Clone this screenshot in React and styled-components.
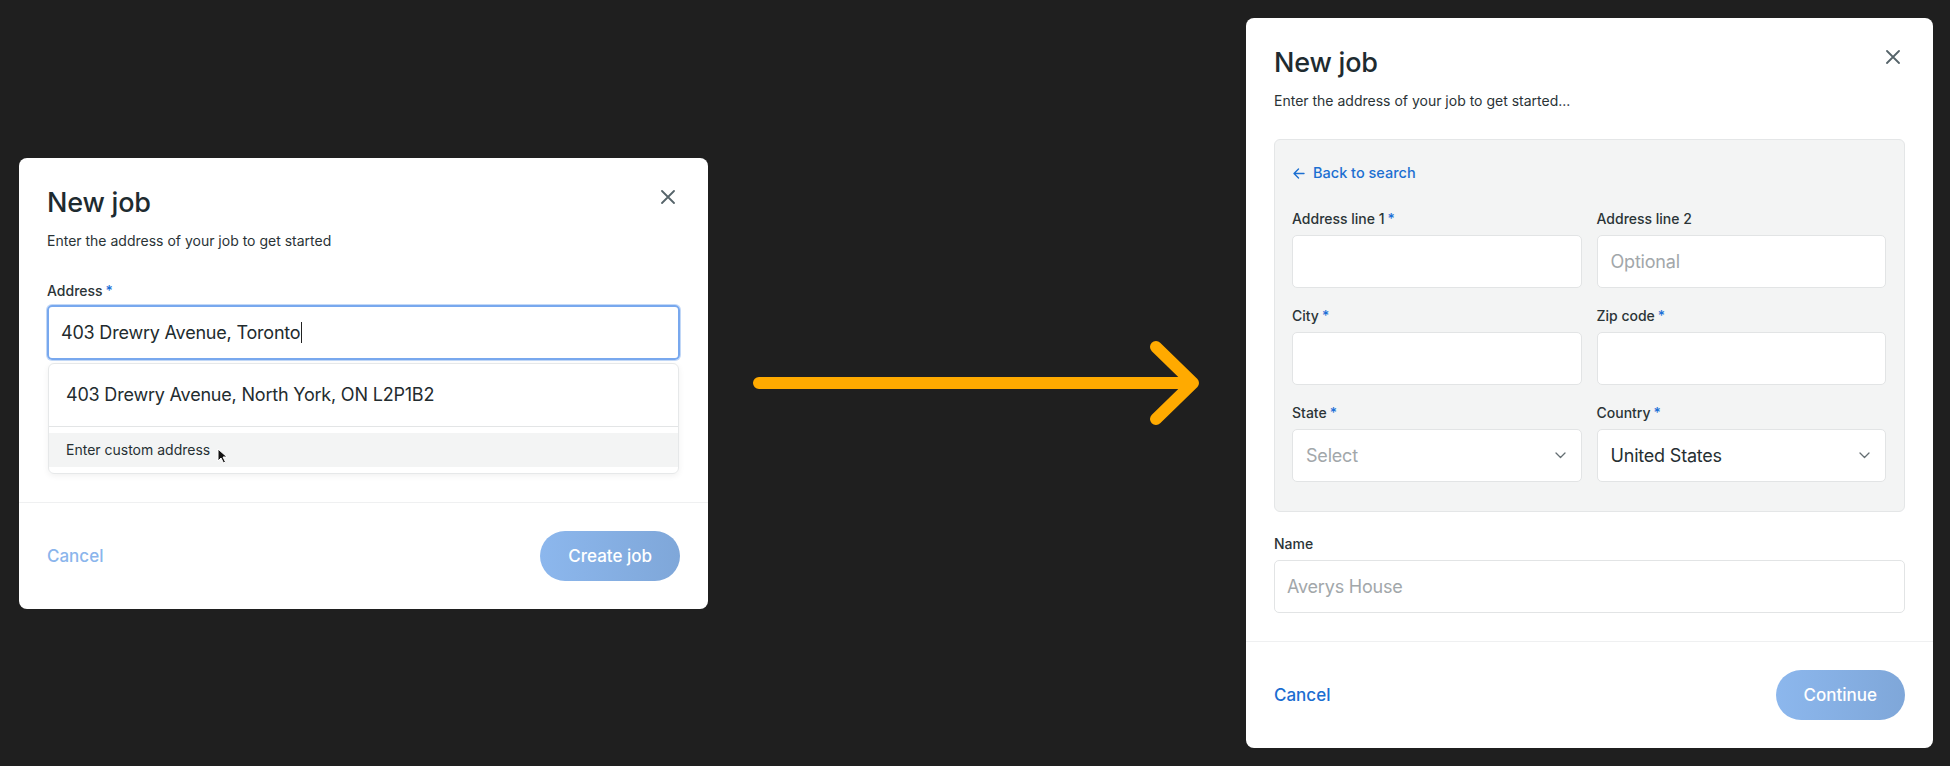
import styled, { createGlobalStyle } from "styled-components";

const GlobalStyle = createGlobalStyle`
  * { box-sizing: border-box; }
  body {
    margin: 0;
    background: #1f1f1f;
    font-family: Inter, "Liberation Sans", sans-serif;
    color: #263236;
  }
`;

const Stage = styled.div`
  display: flex;
  align-items: center;
  height: 766px;
  width: 1950px;
  padding-left: 19px;
`;

const Dialog = styled.div`
  width: ${(p) => p.$width}px;
  background: #ffffff;
  border-radius: 8px;
  display: flex;
  flex-direction: column;
  flex-shrink: 0;
`;

const Header = styled.div`
  display: flex;
  justify-content: space-between;
  align-items: flex-start;
  padding: 28px 28px 0;
`;

const Title = styled.h2`
  margin: 0;
  font-size: 27px;
  line-height: 34px;
  font-weight: 500;
  color: #1e2b30;
  letter-spacing: -0.2px;
`;

const CloseButton = styled.button`
  width: 24px;
  height: 24px;
  margin-top: -1px;
  padding: 0;
  border: none;
  background: none;
  display: flex;
  align-items: center;
  justify-content: center;
`;

const Body = styled.div`
  padding: 0 28px 28px;
  display: flex;
  flex-direction: column;
`;

const Subtitle = styled.p`
  margin: 11px 0 0;
  font-size: 14px;
  line-height: 20px;
  color: #2a3336;
`;

const Label = styled.div`
  font-size: 14px;
  line-height: 20px;
  font-weight: 500;
  color: #2b3437;
  margin-top: ${(p) => p.$top || 0}px;
  margin-bottom: ${(p) => p.$bottom || 6}px;
`;

const Star = styled.span`
  color: #1b6fd6;
  margin-left: 3px;
`;

const FocusInput = styled.div`
  height: 55px;
  border: 2px solid #78a8ee;
  box-shadow: 0 0 0 1px rgba(120, 168, 238, 0.45);
  border-radius: 5px;
  display: flex;
  align-items: center;
  padding: 0 12px;
  font-size: 18px;
  letter-spacing: -0.2px;
  color: #222b2e;
`;

const Caret = styled.span`
  display: inline-block;
  width: 1px;
  height: 21px;
  background: #222;
  margin-left: 1px;
`;

const Suggestions = styled.div`
  margin: 3px 1px 0;
  border: 1px solid #e6e8e9;
  border-radius: 6px;
  box-shadow: 0 2px 6px rgba(0, 0, 0, 0.06);
  padding-bottom: 6px;
  overflow: hidden;
`;

const Suggestion = styled.div`
  height: 63px;
  display: flex;
  align-items: center;
  padding-left: 17px;
  font-size: 18px;
  letter-spacing: -0.2px;
  color: #232c2f;
  border-bottom: 1px solid #e3e5e6;
  margin-bottom: 6px;
`;

const CustomRow = styled.div`
  position: relative;
  height: 34px;
  display: flex;
  align-items: center;
  padding-left: 17px;
  font-size: 14px;
  color: #263033;
  background: #f3f4f4;
`;

const Pointer = styled.svg`
  position: absolute;
  left: 168px;
  top: 15px;
`;

const PanelBox = styled.div`
  margin-top: 28px;
  background: #f3f4f4;
  border: 1px solid #e4e6e7;
  border-radius: 6px;
  padding: 23px 18px 29px 17px;
`;

const BackLink = styled.a`
  display: flex;
  align-items: center;
  gap: 8px;
  font-size: 14.5px;
  line-height: 20px;
  font-weight: 500;
  color: #1c6fd1;
  padding-left: 1px;
`;

const FieldGrid = styled.div`
  display: grid;
  grid-template-columns: 1fr 1fr;
  column-gap: 15px;
  row-gap: 18px;
  margin-top: 26px;
`;

const Field = styled.div`
  display: flex;
  flex-direction: column;
`;

const TextBox = styled.div`
  height: 53px;
  background: #ffffff;
  border: 1px solid #e2e4e5;
  border-radius: 5px;
  display: flex;
  align-items: center;
  justify-content: space-between;
  padding: 0 15px 0 ${(p) => p.$pad || 13}px;
  font-size: 18px;
  letter-spacing: -0.2px;
  color: ${(p) => (p.$placeholder ? "#a2a7aa" : "#262f32")};
`;

const Footer = styled.div`
  border-top: 1px solid #eff0f1;
  padding: 28px;
  display: flex;
  justify-content: space-between;
  align-items: center;
`;

const CancelLink = styled.a`
  font-size: 17px;
  font-weight: 500;
  color: ${(p) => (p.$muted ? "#8ab5ec" : "#1b6dd1")};
`;

const PrimaryButton = styled.button`
  height: 50px;
  padding: 0 28px;
  border: none;
  border-radius: 25px;
  background: linear-gradient(90deg, #8cb7ed, #7fa7d9);
  color: #ffffff;
  font-family: inherit;
  font-size: 17px;
  font-weight: 500;
`;

const ArrowSvg = styled.svg`
  margin: 0 40px 0 39px;
  flex-shrink: 0;
`;

function CloseIcon() {
  return (
    <svg width="14" height="14" viewBox="0 0 14 14">
      <path d="M1 1 L13 13 M13 1 L1 13" stroke="#56646a" strokeWidth="1.8" strokeLinecap="round" />
    </svg>
  );
}

function Chevron() {
  return (
    <svg width="11" height="7" viewBox="0 0 11 7">
      <path d="M1 1 L5.5 5.5 L10 1" fill="none" stroke="#646e72" strokeWidth="1.3" strokeLinecap="round" strokeLinejoin="round" />
    </svg>
  );
}

function DialogHeader() {
  return (
    <Header>
      <Title>New job</Title>
      <CloseButton>
        <CloseIcon />
      </CloseButton>
    </Header>
  );
}

function SearchDialog() {
  return (
    <Dialog $width={689}>
      <DialogHeader />
      <Body>
        <Subtitle>Enter the address of your job to get started</Subtitle>
        <Label $top={30} $bottom={4}>
          Address<Star>*</Star>
        </Label>
        <FocusInput>
          403 Drewry Avenue, Toronto
          <Caret />
        </FocusInput>
        <Suggestions>
          <Suggestion>403 Drewry Avenue, North York, ON L2P1B2</Suggestion>
          <CustomRow>
            Enter custom address
            <Pointer width="11" height="16" viewBox="0 0 11 16">
              <path d="M1 1 L1 13 L4 10 L6.5 15 L8.5 14 L6 9 L10 9 Z" fill="#111" stroke="#fff" strokeWidth="1" strokeLinejoin="round" />
            </Pointer>
          </CustomRow>
        </Suggestions>
      </Body>
      <Footer>
        <CancelLink $muted>Cancel</CancelLink>
        <PrimaryButton>Create job</PrimaryButton>
      </Footer>
    </Dialog>
  );
}

const addressFields = [
  { label: "Address line 1", required: true },
  { label: "Address line 2", placeholder: "Optional" },
  { label: "City", required: true },
  { label: "Zip code", required: true },
  { label: "State", required: true, placeholder: "Select", select: true },
  { label: "Country", required: true, value: "United States", select: true },
];

function AddressDialog() {
  return (
    <Dialog $width={687}>
      <DialogHeader />
      <Body>
        <Subtitle>Enter the address of your job to get started...</Subtitle>
        <PanelBox>
          <BackLink>
            <svg width="12" height="11" viewBox="0 0 12 11">
              <path d="M11 5.5 H1.5 M5.5 1 L1 5.5 L5.5 10" fill="none" stroke="#1c6fd1" strokeWidth="1.4" strokeLinecap="round" strokeLinejoin="round" />
            </svg>
            Back to search
          </BackLink>
          <FieldGrid>
            {addressFields.map((f) => (
              <Field key={f.label}>
                <Label>
                  {f.label}
                  {f.required && <Star>*</Star>}
                </Label>
                <TextBox $placeholder={!!f.placeholder}>
                  <span>{f.value || f.placeholder || ""}</span>
                  {f.select && <Chevron />}
                </TextBox>
              </Field>
            ))}
          </FieldGrid>
        </PanelBox>
        <Label $top={22}>Name</Label>
        <TextBox $placeholder $pad={12}>
          Averys House
        </TextBox>
      </Body>
      <Footer>
        <CancelLink>Cancel</CancelLink>
        <PrimaryButton>Continue</PrimaryButton>
      </Footer>
    </Dialog>
  );
}

export default function App() {
  return (
    <>
      <GlobalStyle />
      <Stage>
        <SearchDialog />
        <ArrowSvg width="459" height="90" viewBox="0 0 459 90">
          <path
            d="M12 45 H446 M409 9 L446 45 L409 81"
            fill="none"
            stroke="#ffaa00"
            strokeWidth="12"
            strokeLinecap="round"
            strokeLinejoin="round"
          />
        </ArrowSvg>
        <AddressDialog />
      </Stage>
    </>
  );
}
